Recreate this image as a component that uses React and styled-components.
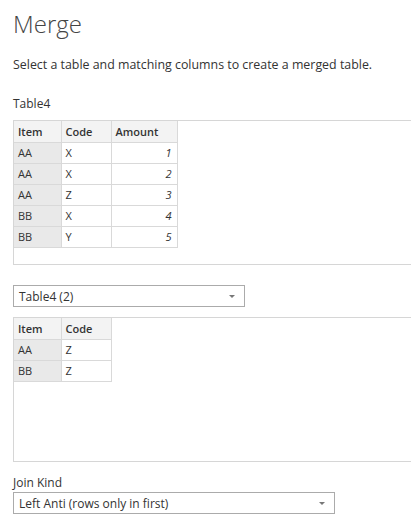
import React from "react";
import styled, { createGlobalStyle } from "styled-components";

const Global = createGlobalStyle`
  html, body { margin: 0; padding: 0; background: #ffffff; }
  body { font-family: "Open Sans", "Noto Sans", sans-serif; color: #333333; overflow: hidden; }
`;

const Page = styled.div`
  width: 411px;
  height: 532px;
  box-sizing: border-box;
  padding: 0 0 0 13px;
  overflow: hidden;
`;

const Title = styled.h1`
  margin: 0;
  padding-top: 7px;
  font-size: 24px;
  font-weight: 300;
  line-height: 34px;
  color: #444444;
`;

const Subtitle = styled.p`
  margin: 15px 0 0 0;
  font-size: 12.4px;
  line-height: 18px;
  color: #333333;
`;

const SectionLabel = styled.div`
  margin: ${(p) => p.$mt || 0}px 0 0 0;
  font-size: 12px;
  line-height: 17px;
  color: #333333;
`;

const Panel = styled.div`
  margin-top: ${(p) => p.$mt || 0}px;
  height: 145px;
  box-sizing: border-box;
  border: 1px solid #d6d6d6;
  border-right: none;
  margin-right: -2px;
`;

const Grid = styled.table`
  border-collapse: collapse;
  border-spacing: 0;
  font-size: 11px;
  color: #333333;
`;

const HeadCell = styled.th`
  width: ${(p) => p.$w}px;
  min-width: ${(p) => p.$w}px;
  max-width: ${(p) => p.$w}px;
  box-sizing: border-box;
  height: 21px;
  padding: 0 0 0 4px;
  text-align: left;
  font-weight: 600;
  background: #f3f3f3;
  border-right: 1px solid #d9d9d9;
  border-bottom: 1px solid #d9d9d9;
  white-space: nowrap;
`;

const Cell = styled.td`
  box-sizing: border-box;
  height: 21px;
  padding: ${(p) => (p.$num ? "0 5px 0 0" : "0 0 0 4px")};
  text-align: ${(p) => (p.$num ? "right" : "left")};
  font-style: ${(p) => (p.$num ? "italic" : "normal")};
  background: ${(p) => (p.$key ? "#e9e9e9" : "#ffffff")};
  border-right: 1px solid #d9d9d9;
  border-bottom: 1px solid #d9d9d9;
  white-space: nowrap;
`;

const Select = styled.div`
  margin-top: ${(p) => p.$mt || 0}px;
  width: ${(p) => p.$w}px;
  height: 22px;
  box-sizing: border-box;
  border: 1px solid #ababab;
  display: flex;
  align-items: center;
  justify-content: space-between;
  padding: 0 9px 0 5px;
  font-size: 12px;
  color: #333333;
`;

const Arrow = styled.span`
  width: 0;
  height: 0;
  border-left: 3px solid transparent;
  border-right: 3px solid transparent;
  border-top: 3px solid #777777;
  margin-top: 1px;
`;

const rows1 = [
  ["AA", "X", 1],
  ["AA", "X", 2],
  ["AA", "Z", 3],
  ["BB", "X", 4],
  ["BB", "Y", 5],
];

const rows2 = [
  ["AA", "Z"],
  ["BB", "Z"],
];

export default function App() {
  return (
    <>
      <Global />
      <Page>
        <Title>Merge</Title>
        <Subtitle>Select a table and matching columns to create a merged table.</Subtitle>
        <SectionLabel $mt={21}>Table4</SectionLabel>
        <Panel $mt={8}>
          <Grid>
            <thead>
              <tr>
                <HeadCell $w={47}>Item</HeadCell>
                <HeadCell $w={50}>Code</HeadCell>
                <HeadCell $w={66}>Amount</HeadCell>
              </tr>
            </thead>
            <tbody>
              {rows1.map((r, i) => (
                <tr key={i}>
                  <Cell $key>{r[0]}</Cell>
                  <Cell>{r[1]}</Cell>
                  <Cell $num>{r[2]}</Cell>
                </tr>
              ))}
            </tbody>
          </Grid>
        </Panel>
        <Select $mt={20} $w={232}>
          <span>Table4 (2)</span>
          <Arrow />
        </Select>
        <Panel $mt={10}>
          <Grid>
            <thead>
              <tr>
                <HeadCell $w={47}>Item</HeadCell>
                <HeadCell $w={50}>Code</HeadCell>
              </tr>
            </thead>
            <tbody>
              {rows2.map((r, i) => (
                <tr key={i}>
                  <Cell $key>{r[0]}</Cell>
                  <Cell>{r[1]}</Cell>
                </tr>
              ))}
            </tbody>
          </Grid>
        </Panel>
        <SectionLabel $mt={12}>Join Kind</SectionLabel>
        <Select $mt={1} $w={322}>
          <span>Left Anti (rows only in first)</span>
          <Arrow />
        </Select>
      </Page>
    </>
  );
}
